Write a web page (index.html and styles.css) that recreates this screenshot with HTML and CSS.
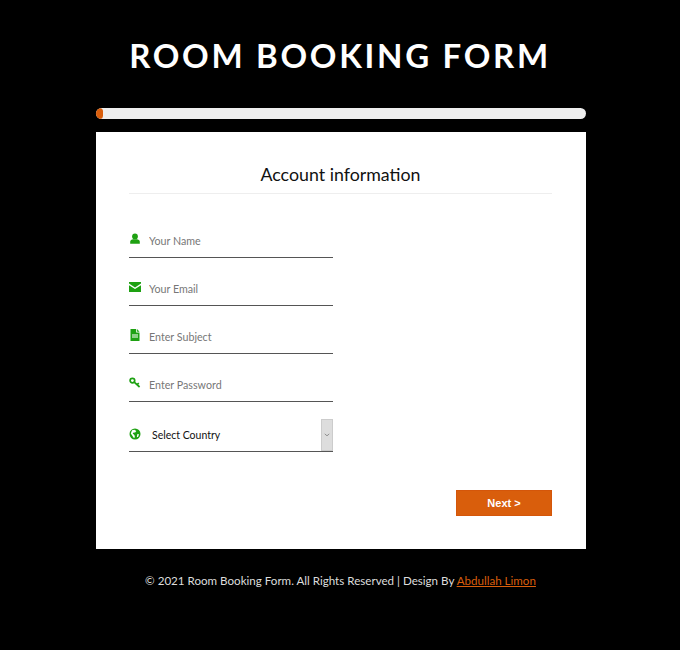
FILE: index.html
```html
<!DOCTYPE html>
<html lang="en">
<head>
    <meta charset="UTF-8">
    <meta name="viewport" content="width=device-width, initial-scale=1.0">
    <title>Room Booking Form</title>
    <link rel="stylesheet" href="styles.css">
</head>
<body>
    <h1 class="title">ROOM BOOKING FORM</h1>
    <div class="wrap">
        <div class="progress"><div class="progress-bar"></div></div>
        <form class="card">
            <h2 class="card-title">Account information</h2>
            <div class="field">
                <svg class="icon" viewBox="0 0 12 12"><circle cx="6" cy="3.4" r="2.9"/><path d="M1.2 10.8V8.8C1.2 7.2 2.6 6.2 4.2 6.2h3.6c1.6 0 3 1 3 2.6v2z"/></svg>
                <input type="text" placeholder="Your Name">
            </div>
            <div class="field">
                <svg class="icon" viewBox="0 0 12 12"><path d="M0 1h12v1.5L6 6.4 0 2.5z"/><path d="M0 4.2l6 3.9 6-3.9V11H0z"/></svg>
                <input type="text" placeholder="Your Email">
            </div>
            <div class="field">
                <svg class="icon" viewBox="0 0 12 12"><path fill-rule="evenodd" d="M1.5 0h5.7v3.6h3.3V12h-9zM3 5.4v1h6v-1zM3 7.5v1h6v-1zM8.1 0l2.4 2.7H8.1z"/></svg>
                <input type="text" placeholder="Enter Subject">
            </div>
            <div class="field">
                <svg class="icon" viewBox="0 0 12 12"><circle class="icon-line" cx="3.4" cy="3.6" r="2.3"/><path class="icon-line" d="M5.2 5.2L10.6 10M8 7.7L9.8 6.2"/></svg>
                <input type="password" placeholder="Enter Password">
            </div>
            <div class="field field-select">
                <svg class="icon" viewBox="0 0 12 12"><path fill-rule="evenodd" d="M6 .5a5.5 5.5 0 1 0 0 11 5.5 5.5 0 0 0 0-11zM3 2.2L5.4 1.8 7.3 3 6.2 4.6 4.6 4.4 3.6 5.6 5.4 7 6 9.6 4.6 9.8 3.2 7.6 1.8 5.6zM8.4 6L10 6.2 9.2 8.8 7.8 9.2z"/></svg>
                <select>
                    <option>Select Country</option>
                </select>
                <span class="select-arrow">
                    <svg viewBox="0 0 8 5"><path d="M1 1l3 2.6L7 1"/></svg>
                </span>
            </div>
            <div class="actions">
                <button type="button" class="next">Next &gt;</button>
            </div>
        </form>
    </div>
    <p class="footer">© 2021 Room Booking Form. All Rights Reserved | Design By <a href="#">Abdullah Limon</a></p>
</body>
</html>
```

FILE: styles.css
```css
* {
    box-sizing: border-box;
}
body {
    margin: 0;
    background: #000;
    font-family: Lato, "Open Sans", sans-serif;
    color: #fff;
}
.title {
    margin: 0;
    padding-top: 34px;
    height: 108px;
    font-size: 33px;
    line-height: 42px;
    font-weight: 700;
    letter-spacing: 2.7px;
    text-align: center;
}
.wrap {
    width: 490px;
    margin-left: 96px;
}
.progress {
    height: 11px;
    margin-bottom: 13px;
    background: #eee;
    border-radius: 6px;
    overflow: hidden;
}
.progress-bar {
    width: 7px;
    height: 100%;
    background: #d95e0c;
    border-radius: 6px;
}
.card {
    height: 417px;
    padding: 32px 34px 0 33px;
    background: #fff;
}
.card-title {
    margin: 0 0 23px;
    height: 30px;
    border-bottom: 1px solid #eee;
    font-size: 17.8px;
    line-height: 20px;
    font-weight: 400;
    color: #111;
    text-align: center;
}
.field {
    display: flex;
    align-items: center;
    width: 204px;
    height: 41px;
    margin-bottom: 7px;
    border-bottom: 1px solid #555;
}
.icon {
    width: 12px;
    height: 12px;
    margin: 3px 8px 0 0;
    flex: none;
    fill: #1ea112;
}
.icon-line {
    fill: none;
    stroke: #1ea112;
    stroke-width: 1.7;
}
.field input {
    flex: 1;
    min-width: 0;
    height: 30px;
    padding: 6px 0 0;
    border: none;
    outline: none;
    font-family: inherit;
    font-size: 10.7px;
    color: #333;
}
.field input::placeholder {
    color: #777;
}
.field-select {
    height: 33px;
    align-items: stretch;
    margin-top: 17px;
    margin-bottom: 0;
}
.field-select .icon {
    margin: 9px 8px 0 0;
}
.field-select select {
    flex: 1;
    min-width: 0;
    padding: 0 0 0 3px;
    border: none;
    outline: none;
    appearance: none;
    background: #fff;
    font-family: inherit;
    font-size: 10.5px;
    color: #111;
}
.select-arrow {
    display: flex;
    align-items: center;
    justify-content: center;
    width: 12px;
    background: #ddd;
    border: 1px solid #ccc;
}
.select-arrow svg {
    width: 6px;
    height: 4px;
    fill: none;
    stroke: #888;
    stroke-width: 1.2;
}
.actions {
    display: flex;
    justify-content: flex-end;
    margin-top: 38px;
}
.next {
    width: 96px;
    height: 26px;
    padding: 0;
    border: 1px solid #d4560a;
    background: #d95e0c;
    font-family: "Liberation Sans", sans-serif;
    font-size: 11px;
    font-weight: 700;
    color: #fff;
    cursor: pointer;
}
.footer {
    margin: 24px 0 0;
    padding-left: 1px;
    font-size: 11.6px;
    line-height: 16px;
    color: #ddd;
    text-align: center;
}
.footer a {
    color: #d95e0c;
}
```
